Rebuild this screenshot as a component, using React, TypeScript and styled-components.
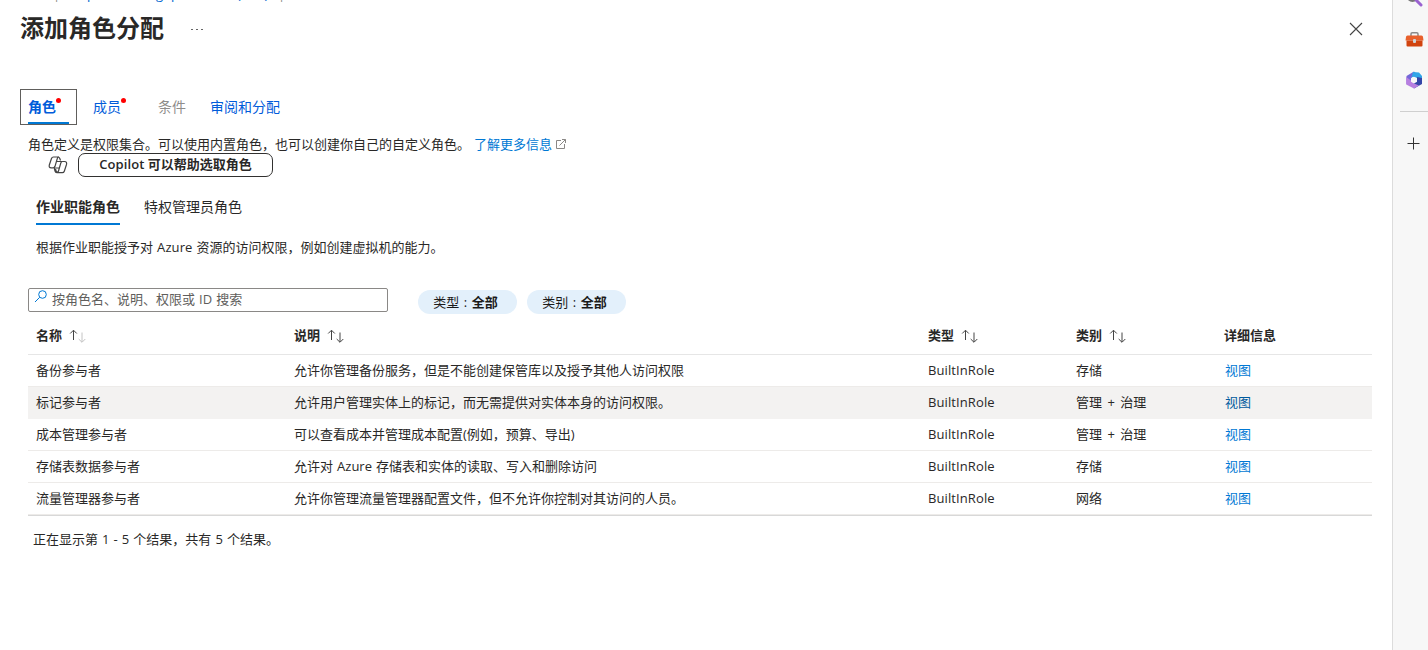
import React from "react";
import styled, { createGlobalStyle, css } from "styled-components";

const GlobalStyle = createGlobalStyle`
  * { box-sizing: border-box; }
  body {
    margin: 0;
    background: #fff;
    color: #292827;
    font: 13px/18px "Open Sans", "Noto Sans CJK SC", sans-serif;
    word-spacing: 0.7px;
    overflow: hidden;
  }
`;

const Page = styled.div`
  display: flex;
  width: 1428px;
  height: 650px;
  overflow: hidden;
`;
const Blade = styled.main`
  flex: 1;
  min-width: 0;
  display: flex;
  flex-direction: column;
`;
const Breadcrumb = styled.nav`
  display: flex;
  height: 3px;
  padding-left: 20px;
  overflow: hidden;
  color: #0067d0;
  white-space: nowrap;
`;
const Crumb = styled.span<{ $w: number; $muted?: boolean }>`
  flex: none;
  width: ${(p) => p.$w}px;
  margin-top: -15px;
  color: ${(p) => (p.$muted ? "#8a8886" : "inherit")};
`;
const TitleRow = styled.header`
  display: flex;
  align-items: center;
  height: 50px;
  padding: 0 29px 0 20px;
`;
const Title = styled.h1`
  margin: 0;
  font-size: 24px;
  line-height: 32px;
  font-weight: 700;
`;
const More = styled.span`
  display: flex;
  gap: 3px;
  margin: 2px auto 0 27px;
  i {
    width: 2px;
    height: 1px;
    background: #666;
  }
`;
const CloseIcon = styled.svg`
  margin-top: 2px;
`;
const Tabs = styled.div`
  display: flex;
  margin: 36px 0 0 20px;
  height: 36px;
  font-size: 14px;
  white-space: nowrap;
`;
const Tab = styled.div<{ $w: number; $active?: boolean; $disabled?: boolean }>`
  display: flex;
  width: ${(p) => p.$w}px;
  height: 36px;
  padding: 0 7px;
  line-height: 34px;
  color: ${(p) => (p.$disabled ? "#8f8d8b" : "#015cda")};
  border: 1px solid transparent;
  ${(p) =>
    p.$active &&
    css`
      margin-right: 8px;
      border-color: #605e5c;
      font-weight: 700;
      background: linear-gradient(#0078d4, #0078d4) 7px 100% / 41px 2px no-repeat;
    `}
`;
const Dot = styled.i`
  width: 5px;
  height: 5px;
  margin-top: 8px;
  border-radius: 50%;
  background: #f00;
`;
const Intro = styled.p`
  display: flex;
  align-items: center;
  margin: 10px 0 0 28px;
  height: 18px;
  line-height: 17px;
`;
const LearnMore = styled.a`
  display: flex;
  align-items: center;
  gap: 3px;
  margin-left: 4px;
  color: #0078d4;
`;
const Link = styled.a<{ $dark?: boolean }>`
  padding-left: 1px;
  color: ${(p) => (p.$dark ? "#005a9e" : "#0078d4")};
`;
const CopilotRow = styled.div`
  display: flex;
  align-items: center;
  height: 24px;
  margin-left: 48px;
`;
const CopilotButton = styled.button`
  width: 195px;
  height: 24px;
  margin-left: 10px;
  padding: 0 0 2px;
  border: 1px solid #323130;
  border-radius: 7px;
  background: #fff;
  color: #292827;
  font: inherit;
  font-weight: 600;
  white-space: nowrap;
`;
const SubTabs = styled.div`
  display: flex;
  gap: 24px;
  margin: 12px 0 0 36px;
  font-size: 14px;
`;
const SubTab = styled.div<{ $active?: boolean }>`
  height: 36px;
  line-height: 36px;
  border-bottom: 2px solid ${(p) => (p.$active ? "#0078d4" : "transparent")};
  font-weight: ${(p) => (p.$active ? 700 : 400)};
`;
const Hint = styled.p`
  margin: 13px 0 0 36px;
`;
const Filters = styled.div`
  display: flex;
  height: 26px;
  margin: 32px 0 0 28px;
`;
const SearchBox = styled.div`
  display: flex;
  width: 360px;
  height: 24px;
  margin-right: 30px;
  padding: 0 5px;
  gap: 4px;
  border: 1px solid #8a8886;
  border-radius: 2px;
  line-height: 20px;
  color: #605e5c;
`;
const Pill = styled.div`
  width: 99px;
  height: 24px;
  margin: 2px 10px 0 0;
  padding-right: 4px;
  border-radius: 12px;
  background: #e3f0fb;
  text-align: center;
  line-height: 24px;
  word-spacing: 1.2px;
  color: #1b1a19;
`;
const Table = styled.div`
  margin: 0 20px 0 28px;
  border-bottom: 1px solid #d8d8d8;
`;
const Row = styled.div<{ $hover?: boolean; $head?: boolean }>`
  display: grid;
  grid-template-columns: 258px 634px 148px 148px 1fr;
  padding-left: 8px;
  height: ${(p) => (p.$head ? 41 : 32)}px;
  line-height: ${(p) => (p.$head ? 43 : 30)}px;
  font-weight: ${(p) => (p.$head ? 700 : 400)};
  border-bottom: 1px solid ${(p) => (p.$head ? "#e6e6e6" : p.$hover ? "#f3f2f1" : "#edebe9")};
  background: ${(p) => (p.$hover ? "#f3f2f1" : "#fff")};
`;
const HeadCell = styled.div`
  display: flex;
  svg { margin: 14px 0 0 7px; }
`;
const Category = styled.span`
  word-spacing: 2px;
`;
const Latin = styled.span`
  letter-spacing: 0.1px;
`;
const Footer = styled.p`
  margin: 14px 0 0 33px;
`;
const Rail = styled.aside`
  display: flex;
  flex-direction: column;
  flex: none;
  width: 36px;
  border-left: 1px solid #dcdcdc;
  background: #f7f7f7;
  overflow: hidden;
`;
const RailRule = styled.hr`
  width: 28px;
  height: 1px;
  margin: 22px 0 0 7px;
  border: 0;
  background: #cfcfcf;
`;
const RailIcon = styled.div<{ $top: number }>`
  height: 18px;
  margin: ${(p) => p.$top}px 0 0 12px;
  flex: none;
  svg { display: block; }
`;

const SortIcon = ({ faded }: { faded?: boolean }) => (
  <svg width="18" height="16" fill="none" stroke="#444">
    <path d="M4.500 12V2.500M1.200 5.500L4.500 2.200L7.800 5.500" />
    <path d="M13 4.500V14M9.700 11L13 14.300L16.300 11" stroke={faded ? "#c4c4c4" : "#444"} />
  </svg>
);

const rows = [
  ["备份参与者", "允许你管理备份服务，但是不能创建保管库以及授予其他人访问权限", "存储"],
  ["标记参与者", "允许用户管理实体上的标记，而无需提供对实体本身的访问权限。", "管理 + 治理"],
  ["成本管理参与者", "可以查看成本并管理成本配置(例如，预算、导出)", "管理 + 治理"],
  ["存储表数据参与者", "允许对 Azure 存储表和实体的读取、写入和删除访问", "存储"],
  ["流量管理器参与者", "允许你管理流量管理器配置文件，但不允许你控制对其访问的人员。", "网络"],
];

export default function App() {
  return (
    <Page>
      <GlobalStyle />
      <Blade>
        <Breadcrumb>
          <Crumb $w={33} />
          <Crumb $w={34} $muted>|</Crumb>
          <Crumb $w={69}>ple-workin</Crumb>
          <Crumb $w={15}>g-</Crumb>
          <Crumb $w={66}>prod-main</Crumb>
          <Crumb $w={41}>(IAM)</Crumb>
          <Crumb $w={20} $muted>|</Crumb>
        </Breadcrumb>
        <TitleRow>
          <Title>添加角色分配</Title>
          <More><i /><i /><i /></More>
          <CloseIcon width="14" height="14" fill="none" stroke="#444" strokeWidth="1.100">
            <path d="M1 1L13 13M13 1L1 13" />
          </CloseIcon>
        </TitleRow>
        <Tabs>
          <Tab $w={57} $active>角色<Dot /></Tab>
          <Tab $w={65}>成员<Dot /></Tab>
          <Tab $w={52} $disabled>条件</Tab>
          <Tab $w={90}>审阅和分配</Tab>
        </Tabs>
        <Intro>
          角色定义是权限集合。可以使用内置角色，也可以创建你自己的自定义角色。
          <LearnMore>
            了解更多信息
            <svg width="12" height="12" fill="none" stroke="#8a8886">
              <path d="M6 2.500H1.500V10.500H9.500V6M7 1.500H10.500V5M10.500 1.500L4.500 7.500" />
            </svg>
          </LearnMore>
        </Intro>
        <CopilotRow>
          <svg width="20" height="18" viewBox="0 0 20 18" fill="none" stroke="#444" strokeWidth="1.200" strokeLinejoin="round">
            <path d="M12.500 4.500L11.800 2.500Q11.300 1 9.800 1H5.500Q4 1 3.500 2.500L1.300 9Q.6 11.800 3.200 11.800H5.200Q6.500 11.800 7 10.300L9.300 2.500Q9.700 1 11 1" />
            <path d="M7.500 13L8.200 15.200Q8.700 16.700 10.200 16.700H14.300Q15.800 16.700 16.300 15.200L18.500 8.500Q19.200 5.500 16.600 5.500H14.600Q13.300 5.500 12.800 7L10.500 15Q10 16.700 8.800 16.700Q7.400 16.700 7 15.200L6.200 12M8.300 5.500H14M6 12H11" />
          </svg>
          <CopilotButton><Latin>Copilot</Latin> 可以帮助选取角色</CopilotButton>
        </CopilotRow>
        <SubTabs>
          <SubTab $active>作业职能角色</SubTab>
          <SubTab>特权管理员角色</SubTab>
        </SubTabs>
        <Hint>根据作业职能授予对 <Latin>Azure</Latin> 资源的访问权限，例如创建虚拟机的能力。</Hint>
        <Filters>
          <SearchBox>
            <svg width="14" height="14" fill="none" stroke="#0078d4">
              <circle cx="8.500" cy="5.500" r="3.800" />
              <path d="M5.700 8.300L1 13" />
            </svg>
            <span>按角色名、说明、权限或 ID 搜索</span>
          </SearchBox>
          <Pill>类型 : <b>全部</b></Pill>
          <Pill>类别 : <b>全部</b></Pill>
        </Filters>
        <Table>
          <Row $head>
            <HeadCell>名称<SortIcon faded /></HeadCell>
            <HeadCell>说明<SortIcon /></HeadCell>
            <HeadCell>类型<SortIcon /></HeadCell>
            <HeadCell>类别<SortIcon /></HeadCell>
            <HeadCell>详细信息</HeadCell>
          </Row>
          {rows.map(([name, description, category], i) => (
            <Row key={name} $hover={i === 1}>
              <span>{name}</span>
              <span>{description}</span>
              <Latin>BuiltInRole</Latin>
              <Category>{category}</Category>
              <Link $dark={i === 1}>视图</Link>
            </Row>
          ))}
        </Table>
        <Footer>正在显示第 1 - 5 个结果，共有 5 个结果。</Footer>
      </Blade>
      <Rail>
        <RailIcon $top={-11}>
          <svg width="18" height="18" fill="none">
            <circle cx="7.500" cy="7" r="5" stroke="#777" strokeWidth="2" />
            <path d="M11 11L16 16" stroke="#9a62d0" strokeWidth="3" strokeLinecap="round" />
          </svg>
        </RailIcon>
        <RailIcon $top={24}>
          <svg width="19" height="18">
            <path d="M6 5V3Q6 1.800 7.200 1.800H11.800Q13 1.800 13 3V5" fill="none" stroke="#8b8b8b" strokeWidth="1.500" />
            <path d="M1 6Q1 4.500 2.500 4.500H16.500Q18 4.500 18 6L18.500 9.500H.5Z" fill="#e8602c" />
            <path d="M1.500 9.500H17.500V14.500Q17.500 15.500 16.500 15.500H2.500Q1.500 15.500 1.500 14.500Z" fill="#d1440f" />
            <rect x="8" y="8" width="3" height="4" rx="1" fill="#ccd5d8" />
          </svg>
        </RailIcon>
        <RailIcon $top={22}>
          <svg width="18" height="18">
            <path d="M9 .5L1.500 5V13L6 10V7L12 3.500Z" fill="#7467d8" />
            <path d="M8 1L14 1.500L17 5V10L12 7L7.500 5.500L6 8Z" fill="#30a5e8" />
            <path d="M17 7V13L9 17.500L7 13L12 10V6Z" fill="#3446a8" />
            <path d="M1.200 6V13.500L9 17.500L14 14.500L9 12.500L6 9.500Z" fill="#b77fe0" />
            <path d="M9 5.800L12 7.400V10.700L9 12.400L6 10.700V7.400Z" fill="#f7f7f7" />
          </svg>
        </RailIcon>
        <RailRule />
        <RailIcon $top={23}>
          <svg width="18" height="18" fill="none" stroke="#333">
            <path d="M2.500 8.500H14.500M8.500 2.500V14.500" />
          </svg>
        </RailIcon>
      </Rail>
    </Page>
  );
}
